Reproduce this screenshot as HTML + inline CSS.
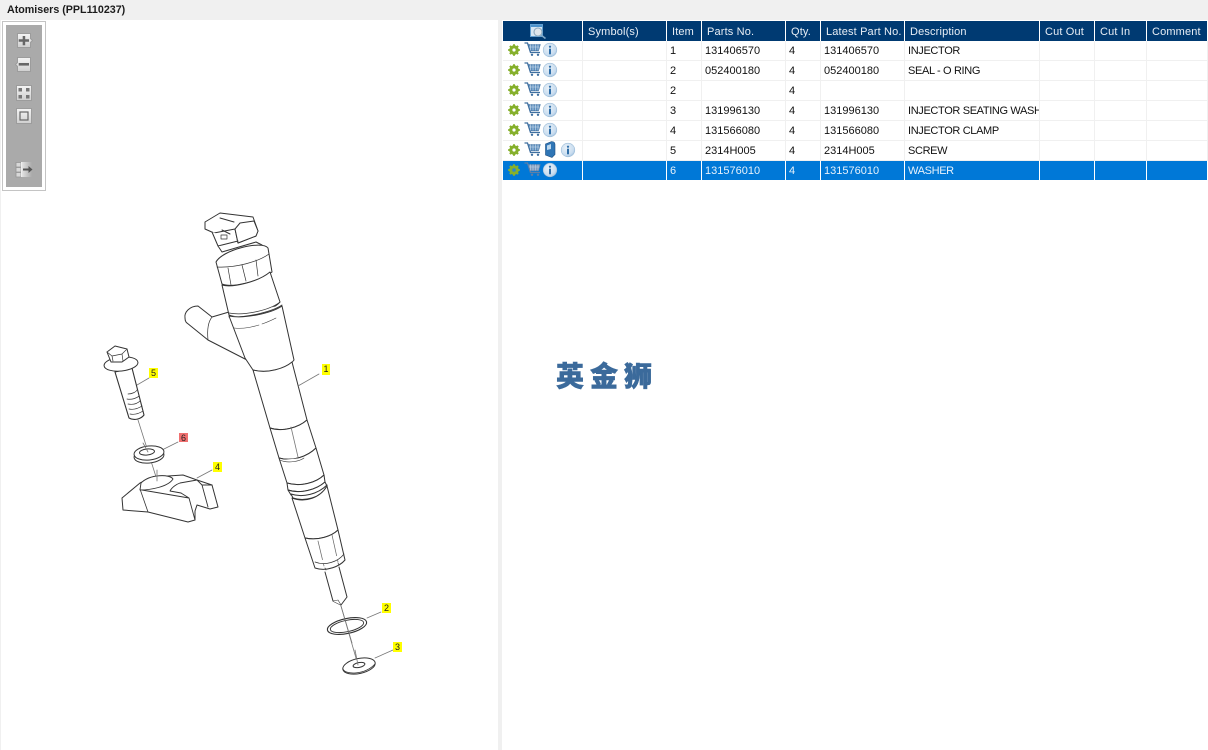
<!DOCTYPE html>
<html><head><meta charset="utf-8"><title>Atomisers</title>
<style>
html,body{margin:0;padding:0;width:1208px;height:750px;overflow:hidden;background:#f0f0f0;font-family:"Liberation Sans",sans-serif}
#title{position:absolute;left:7px;top:3px;font:bold 10.7px/14px "Liberation Sans",sans-serif;color:#1c1c1c}
#left{position:absolute;left:1px;top:20px;width:497px;height:730px;background:#fff}
#right{position:absolute;left:502px;top:20px;width:706px;height:730px;background:#fff}
#art{position:absolute;left:0;top:0}
#tb{position:absolute;left:2px;top:21px;width:42px;height:168px;border:1px solid #c4c4c4;background:#fff}
#tb i{position:absolute;left:3px;top:3px;width:36px;height:162px;background:#aaa}
#tbs{position:absolute;left:0;top:0}
table{position:absolute;left:503px;top:21px;border-collapse:separate;border-spacing:0;table-layout:fixed;width:705px;font:11px/18px "Liberation Sans",sans-serif;color:#111}
th{background:#003a72;color:#e8eef5;font-weight:normal;text-align:left;height:20px;padding:2px 0 0 5px;border-right:1px solid #fff;font-size:11px;line-height:18px;letter-spacing:.15px;white-space:nowrap;overflow:hidden;box-sizing:border-box}
td{height:20px;padding:1px 0 0 3px;border-right:1px solid #f0f0f0;border-bottom:1px solid #f0f0f0;white-space:nowrap;overflow:hidden;box-sizing:border-box}
td.d{letter-spacing:-.35px}
tr.s td{background:#0078d7;color:#e6f1fb;border-right:1px solid #fff;border-bottom:0;height:19px}
#logo{position:absolute;left:556px;top:355px;font:900 28px/40px "Noto Sans CJK SC","Liberation Sans",sans-serif;color:#3b6a9b;letter-spacing:6px;white-space:nowrap;-webkit-text-stroke:.5px #3b6a9b}
.lb{position:absolute;text-align:center;font:9px/10px "Liberation Sans",sans-serif;color:#222;background:#ffff00}
</style></head>
<body>
<div id="title">Atomisers (PPL110237)</div>
<div id="left"></div><div id="right"></div>

<svg id="art" width="498" height="750" viewBox="0 0 498 750" fill="none" stroke="#333" stroke-width="1" stroke-linejoin="round" stroke-linecap="round">
<g fill="#fff">
<!-- connector -->
<path d="M205 222L220 213L253 217L258 231L256 236L238 243L235 229L214 233L205 229Z"/>
<path d="M235 229L238 243L256 236L258 231L254 221L240 223Z"/>
<path d="M212 232L218 246L238 241"/>
<path d="M220 218L234 222M222 230L230 234M218 246L222 252L256 242L262 245"/>
<path d="M221 235h6v4h-6z" stroke-width=".7"/>
<!-- inlet -->
<path d="M198 306C190 306 184 312 185 318C185 322 187 323 187 323L208 340L247 360L229 312L212 317Z"/>
<path d="M208 340C207 330 208 322 212 317" stroke-width=".7"/>
<!-- upper body -->
<path d="M216 262C222 250 262 240 268 248L272 272C258 282 232 288 222 284Z"/>
<path d="M217 267C235 268 258 262 269 254M228 268L231 285M242 265L246 281M256 260L258 276" stroke-width=".7"/>
<path d="M222 285L229 315C240 320 270 313 280 302L270 272C258 282 232 288 222 285Z"/>
<path d="M229 313C245 316 270 310 280 302M229 317C245 318 272 312 282 305" stroke-width=".8"/>
<path d="M229 316L245 358L253 370C270 374 288 368 294 360L282 306C272 313 245 319 229 316Z"/>
<path d="M234 328C245 329 252 327 259 325M262 324C268 322 272 320 276 318" stroke-width=".6"/>
<!-- tube -->
<path d="M253 370L270 428C282 432 298 428 307 420L292 362C285 368 268 374 253 370Z"/>
<!-- mid hex -->
<path d="M270 428L279 458C293 462 308 456 316 448L307 420C298 428 282 432 270 428Z"/>
<path d="M291 427L298 457" stroke="#777" stroke-width=".8"/>
<path d="M279 458L287 483C300 487 316 483 324 475L316 448C308 456 293 462 279 458Z"/>
<path d="M280 460C288 464 300 461 304 458" stroke-width=".6"/>
<!-- grooves -->
<path d="M287 483L288 490C300 494 316 490 325 482L324 475C316 483 300 487 287 483Z"/>
<path d="M288 490L291 495C303 498 318 494 327 486L325 482C316 490 300 494 288 490Z"/>
<path d="M291 494L293 498C305 502 320 497 327 489L327 485C318 494 303 498 291 494Z"/>
<!-- lower body -->
<path d="M292 498L305 538C318 541 332 536 338 530L327 486C320 498 305 503 292 498Z"/>
<path d="M305 538L315 568C327 572 340 566 345 560L338 530C332 536 318 541 305 538Z"/>
<path d="M318 541L324 566M332 535L338 562" stroke="#666" stroke-width=".7"/>
<path d="M315 562C325 566 338 562 344 554M325 568L326 570M338 563L339 565" stroke-width=".7"/>
<!-- nozzle -->
<path d="M325 572L333 601L341 605L347 597L339 567"/>
<path d="M333 601L338 600L341 605" stroke-width=".6"/>
</g>
<!-- leaders -->
<g stroke="#777" stroke-width=".8">
<path d="M341 606L358 665"/>
<path d="M367 618L381 612"/>
<path d="M375 658L393 650"/>
<path d="M298 386L319 374"/>
<path d="M137 385L149 378"/>
<path d="M162 450L178 442"/>
<path d="M197 478L212 470"/>
<path d="M138 420L157 480"/>
</g>
<!-- o-ring -->
<ellipse cx="347" cy="626" rx="20" ry="7.5" transform="rotate(-12 347 626)" stroke-width="1.1"/>
<ellipse cx="347" cy="626" rx="17" ry="5.7" transform="rotate(-12 347 626)" stroke-width=".9"/>
<path d="M341 606L352 643" stroke="#777" stroke-width=".8"/>
<!-- washer 3 -->
<ellipse cx="359" cy="666" rx="16.5" ry="7.5" transform="rotate(-12 359 666)" fill="#fff"/>
<path d="M343 669C345 675 365 675 375 664" stroke-width=".8"/>
<ellipse cx="359" cy="665" rx="6" ry="2.4" transform="rotate(-12 359 665)"/>
<path d="M355 650L358 665" stroke="#777" stroke-width=".8"/>
<!-- bolt -->
<g fill="#fff">
<path d="M115 372L129 418C134 421 141 419 144 415L132 368Z" stroke-width="1.1"/>
<path d="M128 394C132 394 136 392 137 390M127 399C132 400 137 398 139 396M128 404C134 405 138 403 140 401M129 409C134 410 139 408 142 406M130 414C135 415 140 413 143 411" stroke-width=".7" fill="none"/>
<ellipse cx="121" cy="364" rx="17" ry="7" transform="rotate(-6 121 364)"/>
<path d="M107 352L115 346L127 349L129 357L122 362L111 362Z"/>
<path d="M107 352L112 356L122 354L127 349M112 356L113 361M122 354L123 361" stroke-width=".7"/>
</g>
<!-- washer 6 -->
<ellipse cx="149" cy="456" rx="15" ry="7" transform="rotate(-6 149 456)" fill="#fff"/>
<ellipse cx="149" cy="453" rx="15" ry="7" transform="rotate(-6 149 453)" fill="#fff"/>
<ellipse cx="147" cy="452" rx="7.5" ry="3" transform="rotate(-6 147 452)"/>
<path d="M143 443L148 452" stroke="#777" stroke-width=".8"/>
<!-- clamp -->
<g fill="#fff">
<path d="M122 498L140 483L153 477L183 475L197 480L212 485L218 507L210 509L197 505L195 511L195 520L188 522L148 512L123 510Z"/>
<path d="M140 490C150 490 168 487 173 479C170 474 150 474 141 483Z" fill="#fff" stroke-width=".9"/>
<path d="M140 489L148 512" stroke-width=".8"/>
<path d="M142 490L189 498L195 520M189 498L181 493" stroke-width=".9"/>
<path d="M170 491C172 487 177 484 180 483L197 480L202 485L212 485M181 493L170 491M202 485L208 507" stroke-width=".9"/>
</g>
<path d="M157 470L157 481" stroke="#777" stroke-width=".8"/>
</svg>

<div class="lb" style="left:322px;top:364px;width:8px;height:11px">1</div>
<div class="lb" style="left:382px;top:603px;width:9px;height:10px">2</div>
<div class="lb" style="left:393px;top:642px;width:9px;height:10px">3</div>
<div class="lb" style="left:213px;top:462px;width:9px;height:10px">4</div>
<div class="lb" style="left:149px;top:368px;width:9px;height:10px">5</div>
<div class="lb" style="left:179px;top:433px;width:9px;height:9px;background:#f07070">6</div>

<div id="tb"><i></i></div>
<svg id="tbs" width="50" height="195" viewBox="0 0 50 195">
<defs>
<linearGradient id="bt" x1="0" y1="0" x2="0" y2="1"><stop offset="0" stop-color="#f4f4f4"/><stop offset="1" stop-color="#cfcfcf"/></linearGradient>
<linearGradient id="fd" x1="0" y1="0" x2="1" y2="0"><stop offset="0" stop-color="#e8e8e8"/><stop offset="1" stop-color="#aaa"/></linearGradient>
</defs>
<g stroke="#9c9c9c" stroke-width="1">
<path d="M17.5 33.5h13v5l2 2-2 2v5h-13z" fill="url(#bt)"/>
<path d="M17.5 57.5h13v14h-13v-5l-2-2 2-2z" fill="url(#bt)"/>
<rect x="16.5" y="85.5" width="15" height="15" fill="url(#bt)"/>
<rect x="16.5" y="108.5" width="15" height="15" fill="url(#bt)"/>
</g>
<path d="M18.700 39.300h10.300v2.500h-10.300zM22.700 36h2.500v9.300h-2.500z" fill="#666"/>
<rect x="18.700" y="63" width="10.300" height="2.600" fill="#666"/>
<path d="M18.500 88h3.500v3.500h-3.500zM26 88h3.500v3.500h-3.500zM18.500 95h3.500v3.500h-3.500zM26 95h3.500v3.500h-3.500z" fill="#777"/>
<rect x="20" y="112" width="8" height="8" fill="none" stroke="#666" stroke-width="1.200"/>
<path d="M21 162h11v15h-11z" fill="url(#fd)"/>
<path d="M16 162.500h5v4.500h-5zM16 167.500h5v4.500h-5zM16 172.500h5v4.500h-5z" fill="#d8d8d8" stroke="#949494" stroke-width=".8"/>
<path d="M21.500 162v15" stroke="#eee"/>
<path d="M23 168.500h5.500v-2.500l4 3.500-4 3.500v-2.500h-5.500z" fill="#555"/>
</svg>

<table>
<colgroup><col style="width:80px"><col style="width:84px"><col style="width:35px"><col style="width:84px"><col style="width:35px"><col style="width:84px"><col style="width:135px"><col style="width:55px"><col style="width:52px"><col style="width:61px"></colgroup>
<tr><th></th><th>Symbol(s)</th><th>Item</th><th>Parts No.</th><th>Qty.</th><th>Latest Part No.</th><th>Description</th><th>Cut Out</th><th>Cut In</th><th>Comment</th></tr>
<tr><td></td><td></td><td>1</td><td>131406570</td><td>4</td><td>131406570</td><td class="d">INJECTOR</td><td></td><td></td><td></td></tr>
<tr><td></td><td></td><td>2</td><td>052400180</td><td>4</td><td>052400180</td><td class="d">SEAL - O RING</td><td></td><td></td><td></td></tr>
<tr><td></td><td></td><td>2</td><td></td><td>4</td><td></td><td></td><td></td><td></td><td></td></tr>
<tr><td></td><td></td><td>3</td><td>131996130</td><td>4</td><td>131996130</td><td class="d">INJECTOR SEATING WASHER</td><td></td><td></td><td></td></tr>
<tr><td></td><td></td><td>4</td><td>131566080</td><td>4</td><td>131566080</td><td class="d">INJECTOR CLAMP</td><td></td><td></td><td></td></tr>
<tr><td></td><td></td><td>5</td><td>2314H005</td><td>4</td><td>2314H005</td><td class="d">SCREW</td><td></td><td></td><td></td></tr>
<tr class="s"><td></td><td></td><td>6</td><td>131576010</td><td>4</td><td>131576010</td><td class="d">WASHER</td><td></td><td></td><td></td></tr>
</table>

<svg style="position:absolute;left:500px;top:20px" width="90" height="165" viewBox="500 20 90 165" fill="none">
<defs>
<radialGradient id="ig" cx=".4" cy=".35" r=".75"><stop offset="0" stop-color="#eaf2f9"/><stop offset=".7" stop-color="#c8dcef"/><stop offset="1" stop-color="#93b8da"/></radialGradient>
<g id="gear"><circle r="3.200" fill="none" stroke="#86b02c" stroke-width="3.200"/><path d="M0-5.800V-4M0 5.800V4M-5.800 0H-4M5.800 0H4M-4.100-4.100L-2.900-2.900M4.100 4.100L2.900 2.900M-4.100 4.100L-2.900 2.900M4.100-4.100L2.900-2.900" stroke="#86b02c" stroke-width="2"/></g>
<g id="cart" fill="none"><path d="M-8-6.500h3l3 9.500h9.500" stroke="#3f6f9f" stroke-width="1.300"/><path d="M-4.300-5H7.800L6 1.300H-2.300Z" fill="#5f8fbd" stroke="#3f6f9f" stroke-width=".6"/><path d="M-2-5V1M0.500-5V1M3-5V1M5.500-5V1M-3.500-2.500H7" stroke="#cfe0ef" stroke-width=".6"/><circle cx="-.5" cy="5.300" r="1.200" fill="#3f6f9f"/><circle cx="5.500" cy="5.300" r="1.200" fill="#3f6f9f"/></g>
<g id="cart2" fill="none"><path d="M-8-6.500h3l3 9.500h9.500" stroke="#5e7fa6" stroke-width="1.300"/><path d="M-4.300-5H7.800L6 1.300H-2.300Z" fill="#7f9cbf" stroke="#5e7fa6" stroke-width=".6"/><path d="M-2-5V1M0.500-5V1M3-5V1M5.500-5V1M-3.500-2.500H7" stroke="#c5d3e2" stroke-width=".6"/><circle cx="-.5" cy="5.300" r="1.200" fill="#5e7fa6"/><circle cx="5.500" cy="5.300" r="1.200" fill="#5e7fa6"/></g>
<g id="info"><circle r="6.800" fill="url(#ig)" stroke="#9dbdd8" stroke-width=".6"/><circle cy="-3.300" r="1.100" fill="#2f6ea8"/><rect x="-1" y="-1.300" width="2" height="5.600" fill="#2f6ea8"/></g>
</defs>
<use href="#gear" x="514" y="50"/><use href="#cart" x="532.500" y="49.500"/><use href="#info" x="550" y="50"/>
<use href="#gear" x="514" y="70"/><use href="#cart" x="532.500" y="69.500"/><use href="#info" x="550" y="70"/>
<use href="#gear" x="514" y="90"/><use href="#cart" x="532.500" y="89.500"/><use href="#info" x="550" y="90"/>
<use href="#gear" x="514" y="110"/><use href="#cart" x="532.500" y="109.500"/><use href="#info" x="550" y="110"/>
<use href="#gear" x="514" y="130"/><use href="#cart" x="532.500" y="129.500"/><use href="#info" x="550" y="130"/>
<use href="#gear" x="514" y="150"/><use href="#cart" x="532.500" y="149.500"/><use href="#info" x="568" y="150"/>
<path d="M545.500 144l6-2.500c2 0 3.500 1 3.500 3v10l-3 3-6.500-2.500z" fill="#2f75b5" stroke="#1f4f80" stroke-width=".6"/>
<path d="M547 145.500l4-1.500v5l-4 1z" fill="#bcd8ef"/>
<use href="#gear" x="514" y="170"/><use href="#cart2" x="532.500" y="169.500"/><use href="#info" x="550" y="170"/>
<circle cx="514" cy="170" r="1.800" fill="#2e88c8"/>
<!-- header icon -->
<rect x="530.500" y="24.500" width="12" height="12" fill="#d8e7f3" stroke="#62a0d2"/>
<path d="M531 25h11v2h-11z" fill="#4d93cc"/>
<circle cx="538" cy="32" r="4" fill="#dfe6ec" stroke="#8fa9bd" stroke-width="1.100"/>
<path d="M541 35l4.500 3.500" stroke="#7fa7c8" stroke-width="1.600"/>
</svg>

<div id="logo">英金狮</div>
</body></html>
